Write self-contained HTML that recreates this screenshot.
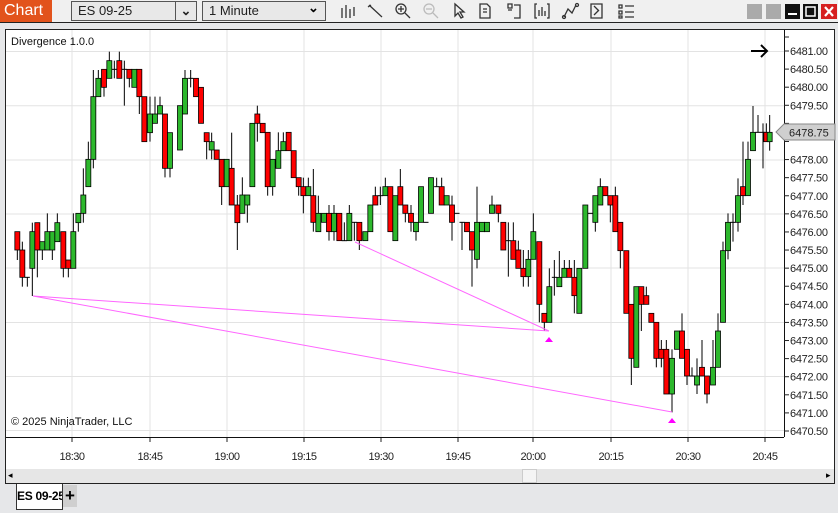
<!DOCTYPE html>
<html><head><meta charset="utf-8"><style>
body{margin:0;width:838px;height:513px;overflow:hidden;background:#e6e7e9;font-family:"Liberation Sans",sans-serif;position:relative}
.tb{position:absolute;left:0;top:0;width:838px;height:22px;background:#f0f0f0;border-bottom:1px solid #222}
.chart{position:absolute;left:0;top:0;width:52px;height:22px;background:#e2531c;color:#fff;font-size:16px;line-height:22px;text-indent:4px}
.dd{position:absolute;top:1px;height:18px;border:1px solid #555;background:#e8e8e8;font-size:13px;line-height:18px;text-indent:6px;color:#222;white-space:nowrap}
.frame{position:absolute;left:5px;top:29px;width:830px;height:455px;background:#fff;border:1px solid #222;box-sizing:border-box}
</style></head><body>
<div class="tb"></div>
<div class="chart">Chart</div>
<div class="dd" style="left:71px;width:103px">ES 09-25</div>
<div class="dd" style="left:175px;width:20px;text-indent:0;text-align:center;font-weight:bold">⌄</div>
<div class="dd" style="left:202px;width:122px">1 Minute</div>
<div style="position:absolute;left:308px;top:0;font-size:13px;font-weight:bold">⌄</div>
<svg style="position:absolute;left:0;top:0" width="838" height="22">
<g stroke="#333" fill="none" stroke-width="1.3">
<path d="M342 8v10M346 5v13M350 9v9M354 7v9"/>
<path d="M369 5l13 12M368 7l3-2"/>
<circle cx="401" cy="9" r="5"/><path d="M405 13l5 5M398 9h6M401 6v6"/>
<g stroke="#bbb"><circle cx="429" cy="9" r="5"/><path d="M433 13l5 5M426 9h6"/></g>
<path d="M455 4v12l3-3 3 5 2-1-3-5h4z"/>
<path d="M480 4h7l3 3v11h-10zM483 9h4M483 12h4"/>
<path d="M508 4h4v4h-4zM514 5h6v13h-6M508 10h4"/>
<path d="M537 4h-2v14h2M547 4h2v14h-2M539 10v6M542 7v9M545 11v5"/>
<path d="M564 17l4-8 4 4 4-8"/><circle cx="564" cy="17" r="1.5"/><circle cx="577" cy="5" r="1.5"/>
<path d="M591 4h11v14h-11zM594 6l5 5M594 15l5-5"/>
<path d="M619 5h3v3h-3zM619 11h3v3h-3zM619 16h3v2h-3zM625 6h9M625 12h9M625 17h9"/>
</g>
<rect x="747" y="4" width="15" height="15" fill="#aaa"/><rect x="766" y="4" width="15" height="15" fill="#aaa"/>
<rect x="785" y="4" width="15" height="15" fill="#111"/><rect x="788" y="13" width="9" height="2" fill="#fff"/>
<rect x="803" y="4" width="15" height="15" fill="#111"/><rect x="806" y="7" width="9" height="9" fill="none" stroke="#fff" stroke-width="1.5"/>
<rect x="821" y="4" width="16" height="15" fill="#d62020"/><path d="M825 7l8 9M833 7l-8 9" stroke="#fff" stroke-width="2.2"/>
</svg>
<div class="frame"></div>
<svg id="c" style="position:absolute;left:0;top:0" width="838" height="513"></svg>
<div style="position:absolute;left:11px;top:36px;font-size:11px;color:#111">Divergence 1.0.0</div>
<div style="position:absolute;left:11px;top:416px;font-size:11px;color:#111">© 2025 NinjaTrader, LLC</div>
<div style="position:absolute;left:6px;top:469px;width:828px;height:14px;background:#e6e6e6"></div>
<div style="position:absolute;left:522px;top:469px;width:15px;height:14px;background:#f4f4f4;border:1px solid #ccc;box-sizing:border-box"></div>
<div style="position:absolute;left:8px;top:470px;font-size:9px">◂</div>
<div style="position:absolute;left:826px;top:470px;font-size:9px">▸</div>
<div style="position:absolute;left:16px;top:484px;width:47px;height:26px;background:#fff;border:1px solid #333;border-top:none;box-sizing:border-box;font-size:12px;font-weight:bold;line-height:24px;text-align:center;white-space:nowrap;letter-spacing:-0.3px;overflow:hidden">ES 09-25</div>
<div style="position:absolute;left:63px;top:485px;width:14px;height:22px;background:#cfcfcf;font-size:17px;font-weight:bold;line-height:21px;text-align:center">+</div>
<script>
var s='';
function P(p){return 51+(6481-p)*36.19;}
[51.5,105.8,160,214,268,322.5,376.5,430.5].forEach(function(y){s+='<line x1="6" x2="784" y1="'+y+'" y2="'+y+'" stroke="#e3e3e3"/>';});
var tx=[72,150,227,304,381,458,533,611,688,765],tl=['18:30','18:45','19:00','19:15','19:30','19:45','20:00','20:15','20:30','20:45'];
tx.forEach(function(x,i){s+='<line x1="'+x+'" x2="'+x+'" y1="30" y2="437" stroke="#e3e3e3"/><line x1="'+x+'" x2="'+x+'" y1="437" y2="442" stroke="#222"/><text x="'+x+'" y="460" font-size="11" text-anchor="middle" fill="#222" letter-spacing="-0.5">'+tl[i]+'</text>';});
s+='<line x1="6" x2="784" y1="437.5" y2="437.5" stroke="#111"/><line x1="784.5" x2="784.5" y1="30" y2="437" stroke="#111"/>';
for(var i=0;i<=21;i++){var p=6481-i*0.5,y=P(p);s+='<line x1="784" x2="789" y1="'+y+'" y2="'+y+'" stroke="#222"/>';if(p!=6478.5&&p!=6479)s+='<text x="790" y="'+(y+4)+'" font-size="11" fill="#222" letter-spacing="-0.3">'+p.toFixed(2)+'</text>';}
s+='<line x1="784" x2="789" y1="37" y2="37" stroke="#222"/>';
function G(ox,oy,arr){arr.forEach(function(b){var x=ox+b[0]/3,t=oy+b[1]/3,bt=oy+b[2]/3,h=oy+(b[3]==null?b[1]:b[3])/3,l=oy+(b[4]==null?b[2]:b[4])/3;
s+='<line x1="'+x+'" x2="'+x+'" y1="'+Math.min(h,t)+'" y2="'+Math.max(l,bt)+'" stroke="#000"/>';
if(b[5]=='d')s+='<line x1="'+(x-2.5)+'" x2="'+(x+2.5)+'" y1="'+t+'" y2="'+t+'" stroke="#000"/>';
else s+='<rect x="'+(x-2.5)+'" y="'+t+'" width="5" height="'+Math.max(bt-t,1)+'" fill="'+(b[5]=='r'?'#ff0000':'#2db82d')+'" stroke="#000" stroke-width="0.8"/>';});}
G(0,40,[[52,575,630,575,660,'r'],[67,630,712,605,740,'r'],[82,712,712,712,740,'d'],[97,575,685,548,768,'g'],[112,548,630,548,712,'r'],[127,605,630,605,660,'g'],[142,575,630,520,630,'g'],[157,575,630,575,660,'g'],[172,548,605,520,605,'g'],[190,575,685,575,712,'r'],[205,660,685,660,712,'r'],[220,575,685,520,685,'g'],[235,520,548,520,575,'g'],[250,465,520,385,548,'g'],[265,358,440,305,440,'g'],[280,170,358,90,385,'g'],[295,115,170,90,170,'g'],[312,88,142,88,170,'r'],[328,62,115,35,115,'g'],[343,88,88,62,115,'d'],[358,62,115,35,115,'r'],[373,88,88,62,197,'d'],[388,88,115,88,142,'r'],[403,88,142,88,142,'g'],[418,88,170,88,222,'r'],[433,170,305,170,305,'r'],[450,222,278,170,305,'g'],[465,222,250,170,250,'g'],[480,197,222,170,222,'g'],[495,222,385,222,412,'r'],[510,278,385,278,412,'g'],[540,197,330,197,330,'g'],[555,115,222,90,222,'g'],[572,115,115,90,142,'d'],[588,115,170,115,170,'r'],[603,142,250,142,250,'r'],[620,278,305,278,358,'r'],[635,305,330,278,358,'g'],[650,330,358,330,358,'r'],[665,358,440,358,495,'r'],[680,358,440,358,440,'g'],[695,385,495,278,495,'r'],[712,495,548,465,630,'r'],[727,465,520,412,520,'g'],[742,465,495,465,548,'g'],[757,250,440,250,440,'g'],[772,222,250,197,305,'r'],[788,250,278,250,278,'r']]);
G(260,90,[[23,127,290,127,317,'r'],[38,208,290,208,317,'g'],[55,182,235,127,235,'g'],[70,155,182,127,182,'g'],[86,127,182,127,182,'r'],[101,182,263,182,263,'r'],[116,263,290,263,317,'r'],[130,290,317,263,370,'r'],[145,290,317,263,317,'g'],[160,317,397,237,425,'r'],[175,370,425,317,425,'g'],[192,370,397,370,397,'g'],[207,370,425,345,452,'r'],[222,370,425,345,452,'g'],[238,370,452,370,452,'r'],[253,452,452,397,452,'d'],[268,370,452,345,452,'g'],[283,397,397,397,452,'d'],[298,397,452,397,480,'r'],[316,425,452,425,452,'g'],[331,345,425,345,425,'g'],[346,317,345,290,345,'r'],[361,317,317,290,345,'d'],[376,290,317,263,317,'g'],[391,290,425,290,425,'r'],[406,317,452,317,452,'g'],[421,290,345,237,345,'r'],[436,345,370,345,397,'r'],[453,370,397,345,425,'r'],[468,397,425,397,452,'g'],[483,290,397,290,397,'g'],[498,397,397,397,397,'d'],[513,263,370,263,370,'g'],[530,290,290,263,290,'d'],[545,290,345,263,345,'r'],[560,317,345,317,345,'g'],[576,345,397,317,452,'r'],[591,370,370,370,370,'d'],[606,397,397,397,480,'d'],[621,397,425,397,425,'r'],[636,425,480,425,590,'r'],[651,397,508,290,535,'g'],[666,397,425,397,425,'g'],[681,397,425,397,425,'g'],[696,345,370,317,370,'g'],[715,345,370,345,397,'r'],[730,397,480,397,480,'r'],[745,452,452,397,560,'d'],[760,452,508,397,508,'r'],[775,480,535,452,535,'r'],[790,535,560,480,590,'r']]);
G(520,90,[[25,508,560,480,590,'g'],[40,425,508,370,508,'g'],[58,455,643,455,697,'r'],[73,670,697,670,723,'r'],[88,590,697,535,697,'g'],[103,562,562,510,617,'d'],[118,562,590,483,590,'g'],[133,535,562,510,562,'g'],[148,535,562,510,562,'r'],[163,562,617,510,670,'r'],[178,535,670,535,670,'g'],[196,345,535,345,535,'g'],[211,370,370,370,370,'d'],[226,317,397,317,425,'g'],[241,290,345,265,345,'g'],[256,290,317,290,317,'r'],[271,317,345,317,397,'r'],[286,317,425,290,425,'r'],[301,397,482,397,535,'r'],[319,482,670,482,670,'r'],[334,643,805,643,885,'r'],[349,590,832,590,832,'g'],[364,590,643,590,723,'r'],[379,617,643,590,643,'r'],[394,670,697,670,697,'r'],[409,697,805,697,832,'r'],[424,778,805,750,832,'r'],[439,778,912,750,912,'r'],[456,805,912,778,967,'g'],[471,723,778,723,778,'g'],[486,723,805,670,805,'r'],[501,778,858,778,885,'r'],[516,858,858,832,858,'d'],[531,858,885,805,912,'g'],[546,832,858,750,858,'r'],[561,858,912,858,940,'r'],[579,832,885,750,885,'g'],[594,723,832,670,832,'g'],[609,482,697,455,697,'g'],[624,397,482,370,508,'g'],[639,397,397,370,455,'d'],[654,317,397,265,425,'g'],[669,290,317,155,345,'r'],[684,208,317,155,317,'g'],[699,127,182,48,182,'g'],[714,127,127,75,127,'d'],[729,127,127,100,235,'d'],[739,127,155,100,155,'r'],[749,127,155,75,182,'g']]);
s+='<g stroke="#ff66ff" stroke-width="1"><line x1="33" y1="296" x2="549" y2="331"/><line x1="33" y1="296" x2="672" y2="412"/><line x1="355" y1="242" x2="549" y2="331"/></g>';
s+='<path d="M545 342l4-5 4 5z" fill="#ff00ff"/><path d="M668 423l4-5 4 5z" fill="#ff00ff"/>';
s+='<path d="M751 51h16M761 45l6 6-6 6" stroke="#000" stroke-width="2" fill="none"/>';
s+='<path d="M776 132l8-8h51v16h-51z" fill="#cfcfcf" stroke="#888"/><text x="789" y="136.5" font-size="11" fill="#222">6478.75</text>';
document.getElementById('c').innerHTML=s;
</script>
</body></html>
